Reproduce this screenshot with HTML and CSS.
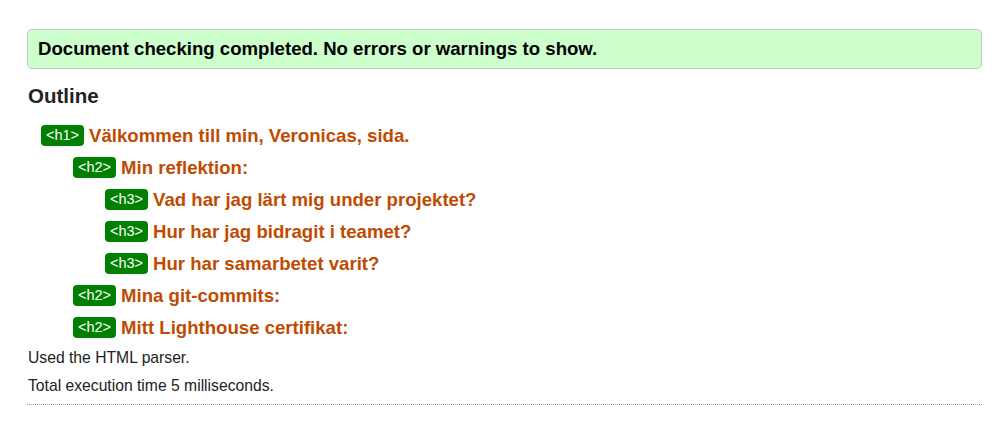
FILE: index.html
```html
<!DOCTYPE html>
<html>
<head>
<meta charset="utf-8">
<link rel="stylesheet" href="styles.css">
</head>
<body>
<div class="page">
  <p class="success">Document checking completed. No errors or warnings to show.</p>
  <h2 class="outline-title">Outline</h2>
  <ol class="outline">
    <li class="lvl1"><span class="tag">&lt;h1&gt;</span><span class="heading">Välkommen till min, Veronicas, sida.</span></li>
    <li class="lvl2"><span class="tag">&lt;h2&gt;</span><span class="heading">Min reflektion:</span></li>
    <li class="lvl3"><span class="tag">&lt;h3&gt;</span><span class="heading">Vad har jag lärt mig under projektet?</span></li>
    <li class="lvl3"><span class="tag">&lt;h3&gt;</span><span class="heading">Hur har jag bidragit i teamet?</span></li>
    <li class="lvl3"><span class="tag">&lt;h3&gt;</span><span class="heading">Hur har samarbetet varit?</span></li>
    <li class="lvl2"><span class="tag">&lt;h2&gt;</span><span class="heading">Mina git-commits:</span></li>
    <li class="lvl2"><span class="tag">&lt;h2&gt;</span><span class="heading">Mitt Lighthouse certifikat:</span></li>
  </ol>
  <p class="stats">Used the HTML parser.</p>
  <p class="stats stats-last">Total execution time 5 milliseconds.</p>
  <div class="rule"></div>
</div>
</body>
</html>
```
FILE: styles.css
```css
html, body {
  margin: 0;
  padding: 0;
  background: #fff;
}
body {
  font-family: "Liberation Sans", Arial, sans-serif;
  color: #222;
}
.page {
  margin: 29px 23px 0 27px;
}
.success {
  margin: 0;
  background: #ccffcc;
  border: 1px solid #c8c8c8;
  border-radius: 5px;
  padding: 8px 10px;
  font-size: 18.6px;
  font-weight: bold;
  line-height: 22px;
  color: #000;
}
.outline-title {
  margin: 15px 0 0 1px;
  font-size: 20.5px;
  line-height: 24px;
  font-weight: bold;
  color: #222;
}
.outline {
  list-style: none;
  margin: 17px 0 0 0;
  padding: 0;
}
.outline li {
  display: flex;
  align-items: center;
  height: 21px;
  margin-bottom: 11px;
}
.lvl1 { padding-left: 14px; }
.lvl2 { padding-left: 46px; }
.lvl3 { padding-left: 78px; }
.tag {
  display: inline-block;
  background: #008000;
  color: #fff;
  font-size: 14.5px;
  line-height: 21px;
  height: 21px;
  padding: 0 5px;
  border-radius: 4px;
  margin-right: 5px;
}
.heading {
  color: #c04b00;
  font-size: 18.6px;
  font-weight: bold;
}
.stats {
  margin: 0 0 10px 1px;
  font-size: 15.7px;
  line-height: 18px;
  color: #222;
}
.stats-last {
  margin-bottom: 9px;
}
.rule {
  border-top: 1px dotted #999;
}
```
